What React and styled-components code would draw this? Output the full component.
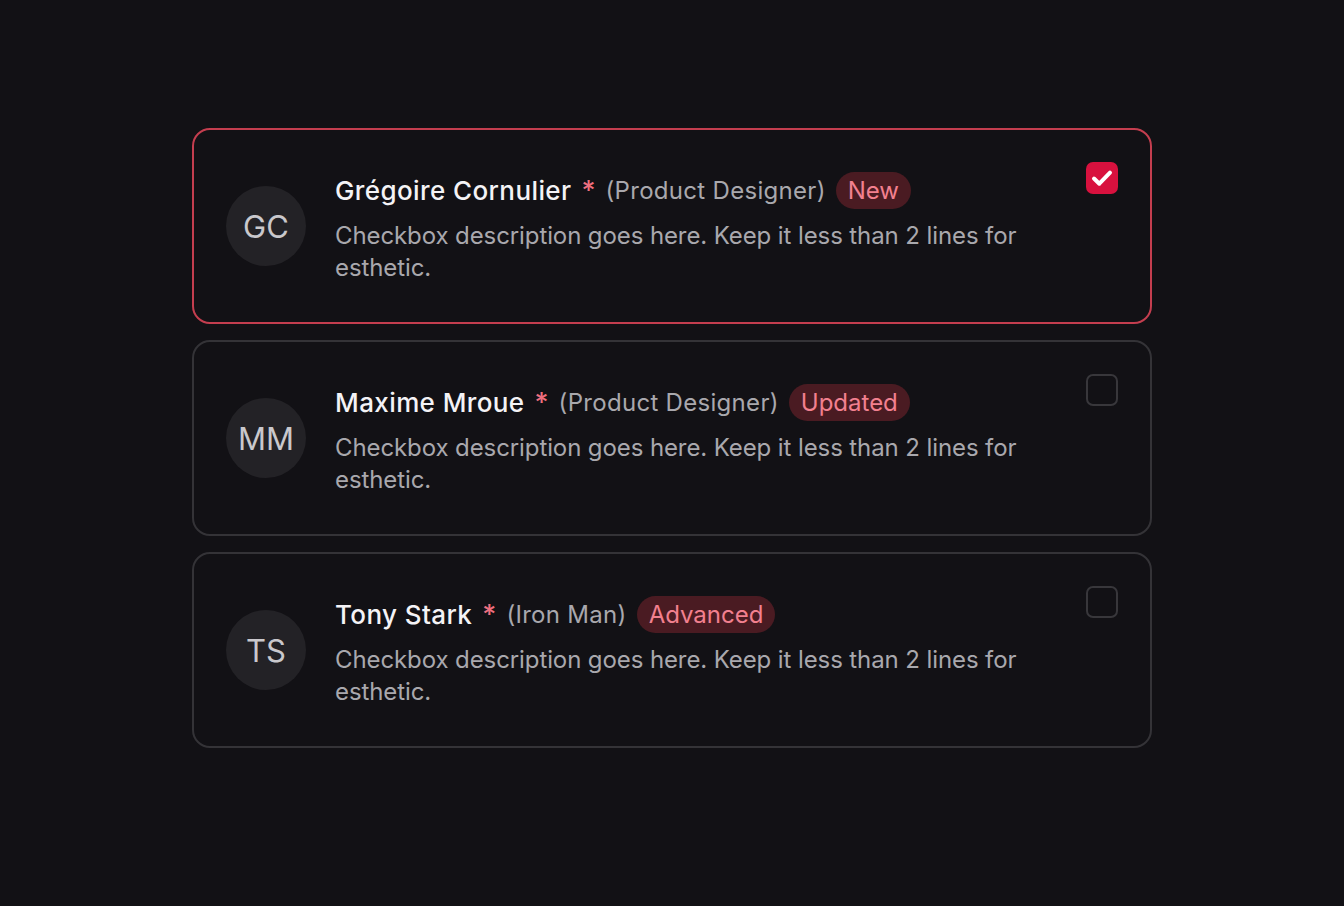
import React, { useState } from "react";
import styled, { createGlobalStyle } from "styled-components";

const GlobalStyle = createGlobalStyle`
  html, body {
    margin: 0;
    padding: 0;
    background: #121115;
  }
  body {
    font-family: Inter, "Noto Sans", sans-serif;
    -webkit-font-smoothing: antialiased;
  }
`;

const people = [
  {
    initials: "GC",
    name: "Grégoire Cornulier",
    role: "(Product Designer)",
    badge: "New",
  },
  {
    initials: "MM",
    name: "Maxime Mroue",
    role: "(Product Designer)",
    badge: "Updated",
  },
  {
    initials: "TS",
    name: "Tony Stark",
    role: "(Iron Man)",
    badge: "Advanced",
  },
];

const App = () => {
  const [checked, setChecked] = useState([true, false, false]);

  const toggle = (i) =>
    setChecked((prev) => prev.map((v, j) => (j === i ? !v : v)));

  return (
    <Page>
      <GlobalStyle />
      <List>
        {people.map((p, i) => (
          <Card key={p.initials} $active={checked[i]} onClick={() => toggle(i)}>
            <Avatar>{p.initials}</Avatar>
            <Body>
              <TitleRow>
                <Name>{p.name}</Name>
                <Required>*</Required>
                <Role>{p.role}</Role>
                <Badge>{p.badge}</Badge>
              </TitleRow>
              <Description>
                Checkbox description goes here. Keep it less than 2 lines for
                esthetic.
              </Description>
            </Body>
            <Box $checked={checked[i]}>
              {checked[i] && (
                <svg width="32" height="32" viewBox="0 0 24 24" fill="none">
                  <path
                    d="M6 12.4l4 3.9L18 8"
                    stroke="#fff"
                    strokeWidth="3"
                    strokeLinecap="round"
                    strokeLinejoin="round"
                  />
                </svg>
              )}
            </Box>
          </Card>
        ))}
      </List>
    </Page>
  );
};

const Page = styled.div`
  min-height: 100vh;
  display: flex;
  justify-content: center;
  padding-top: 128px;
  box-sizing: border-box;
`;

const List = styled.div`
  width: 960px;
  display: flex;
  flex-direction: column;
  gap: 16px;
`;

const Card = styled.div`
  display: flex;
  align-items: center;
  gap: 29px;
  padding: 32px;
  min-height: 196px;
  box-sizing: border-box;
  border: 2px solid ${(p) => (p.$active ? "#c43e4f" : "#343337")};
  border-radius: 18px;
  background: #121115;
  cursor: pointer;
`;

const Avatar = styled.div`
  flex: 0 0 80px;
  height: 80px;
  border-radius: 50%;
  background: #232226;
  color: #c9c8cc;
  font-size: 31px;
  font-weight: 400;
  display: flex;
  align-items: center;
  justify-content: center;
`;

const Body = styled.div`
  flex: 1;
  display: flex;
  flex-direction: column;
  gap: 11px;
  margin-top: 3px;
  padding-right: 40px;
`;

const TitleRow = styled.div`
  display: flex;
  align-items: center;
  gap: 10px;
`;

const Name = styled.span`
  color: #f4f3f6;
  font-size: 26px;
  font-weight: 500;
  letter-spacing: 0.4px;
`;

const Required = styled.span`
  color: #ee6f7f;
  font-size: 27px;
  font-weight: 500;
  line-height: 1;
`;

const Role = styled.span`
  color: #a9a8ad;
  font-size: 24px;
  font-weight: 400;
  letter-spacing: 0.3px;
`;

const Badge = styled.span`
  background: #4a1b22;
  color: #f2808f;
  font-size: 24px;
  font-weight: 400;
  line-height: 37px;
  padding: 0 12px;
  border-radius: 999px;
`;

const Description = styled.p`
  margin: 0;
  color: #a9a8ad;
  font-size: 24px;
  line-height: 32px;
  letter-spacing: -0.1px;
  max-width: 700px;
`;

const Box = styled.div`
  align-self: flex-start;
  flex: 0 0 32px;
  height: 32px;
  box-sizing: border-box;
  border-radius: 7px;
  border: ${(p) => (p.$checked ? "none" : "2px solid #38373b")};
  background: ${(p) => (p.$checked ? "#d8113e" : "transparent")};
  display: flex;
  align-items: center;
  justify-content: center;
`;

export default App;
